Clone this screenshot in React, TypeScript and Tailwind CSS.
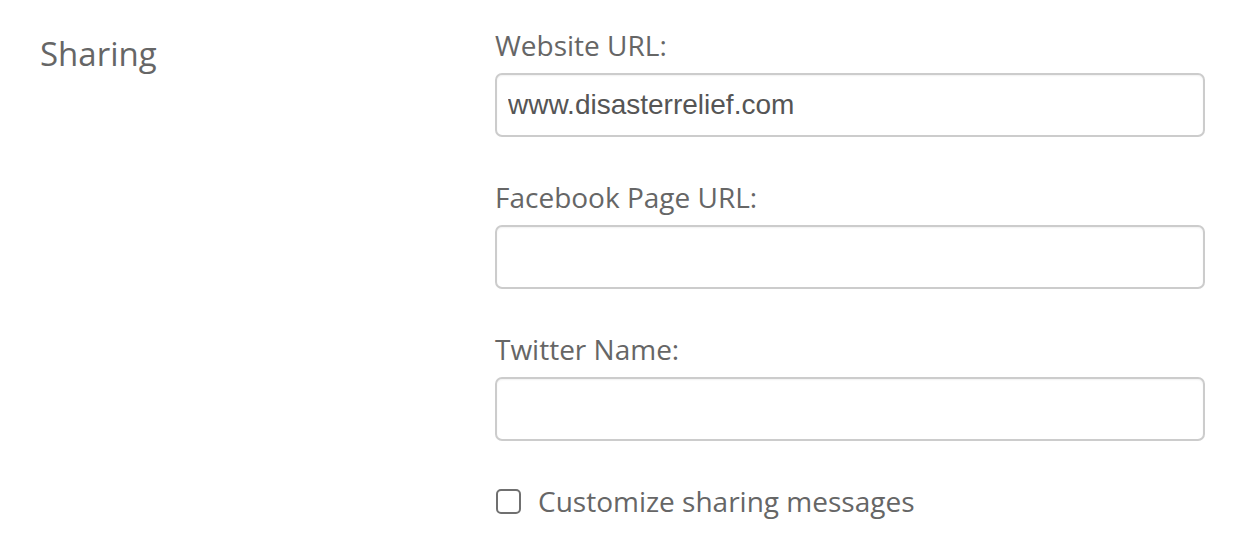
import { useState } from 'react';

const labelCls = 'block text-[28px] leading-[36px] text-[#666666] mb-[10px]';
const inputCls =
  'w-full h-[64px] rounded-[7px] border-2 border-[#cccccc] bg-white px-[11px] text-[28px] text-[#555555] shadow-[inset_0_1px_2px_rgba(0,0,0,0.06)] outline-none';

function Field({ label, value }: { label: string; value: string }) {
  const [text, setText] = useState(value);
  return (
    <div className="mb-[42px]">
      <label className={labelCls}>{label}</label>
      <input
        type="text"
        value={text}
        onChange={(e) => setText(e.target.value)}
        className={inputCls}
        style={{ fontFamily: '"Liberation Sans", Arial, sans-serif' }}
      />
    </div>
  );
}

export default function App() {
  const [custom, setCustom] = useState(false);

  return (
    <div
      className="w-[1238px] h-[548px] bg-white flex"
      style={{ fontFamily: '"Open Sans", "Noto Sans", sans-serif' }}
    >
      <div className="w-[495px] pl-[40px] pt-[32px]">
        <h2 className="text-[33px] leading-[44px] text-[#666666]">Sharing</h2>
      </div>

      <div className="w-[710px] pt-[27px]">
        <Field label="Website URL:" value="www.disasterrelief.com" />
        <Field label="Facebook Page URL:" value="" />
        <Field label="Twitter Name:" value="" />

        <label className="flex items-center gap-[17px] mt-[2px] cursor-pointer">
          <input
            type="checkbox"
            checked={custom}
            onChange={(e) => setCustom(e.target.checked)}
            className="appearance-none w-[25px] h-[25px] ml-[1px] rounded-[5px] border-2 border-[#707070] bg-white"
          />
          <span className="text-[28px] leading-[36px] text-[#666666]">Customize sharing messages</span>
        </label>
      </div>
    </div>
  );
}
